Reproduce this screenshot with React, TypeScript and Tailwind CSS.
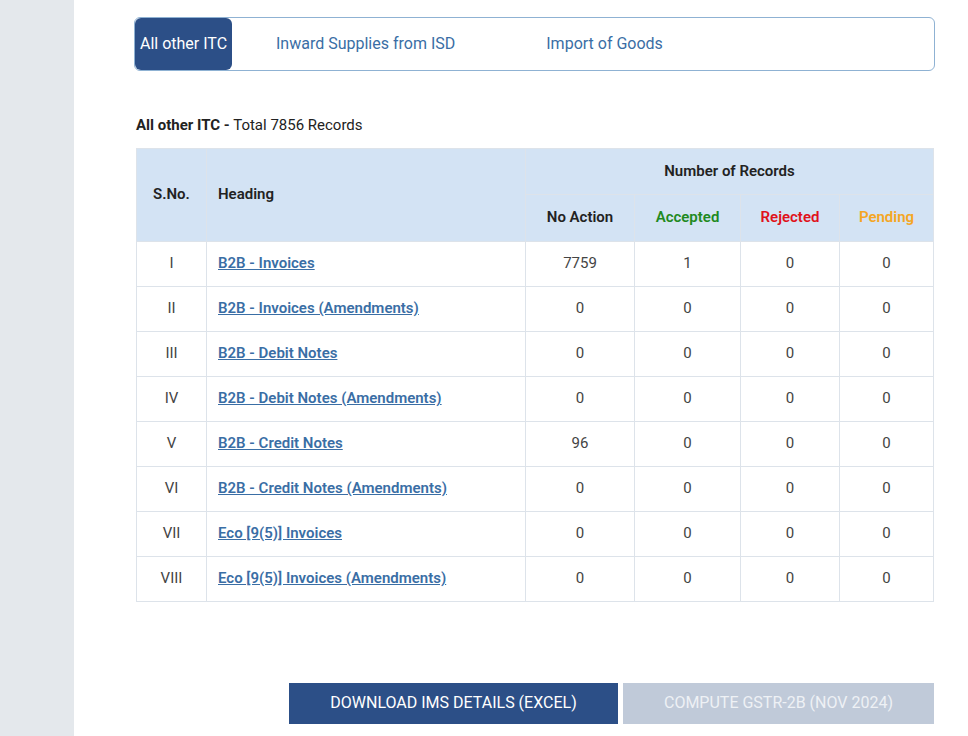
const rows: [string, string, number, number, number, number][] = [
  ["I", "B2B - Invoices", 7759, 1, 0, 0],
  ["II", "B2B - Invoices (Amendments)", 0, 0, 0, 0],
  ["III", "B2B - Debit Notes", 0, 0, 0, 0],
  ["IV", "B2B - Debit Notes (Amendments)", 0, 0, 0, 0],
  ["V", "B2B - Credit Notes", 96, 0, 0, 0],
  ["VI", "B2B - Credit Notes (Amendments)", 0, 0, 0, 0],
  ["VII", "Eco [9(5)] Invoices", 0, 0, 0, 0],
  ["VIII", "Eco [9(5)] Invoices (Amendments)", 0, 0, 0, 0],
];

export default function App() {
  return (
    <div className="flex h-[736px] w-[968px] overflow-hidden bg-white text-[#222]" style={{ fontFamily: "Roboto, 'Noto Sans', sans-serif" }}>
      <div className="w-[74px] shrink-0 bg-[#e4e8ec]" />
      <div className="flex-1 pl-[60px] pr-[33px] pt-[17px]">
        <div className="flex h-[54px] items-stretch rounded-md border border-[#8fb2d3] text-[16px]">
          <div className="flex w-[97px] items-center justify-center rounded-md bg-[#2c4f87] text-white">All other ITC</div>
          <div className="flex items-center pl-[44px] text-[#3a6ea5]">Inward Supplies from ISD</div>
          <div className="flex items-center pl-[91px] text-[#3a6ea5]">Import of Goods</div>
        </div>
        <div className="mt-[43px] ml-[2px] text-[15px]">
          <b>All other ITC -</b> Total 7856 Records
        </div>
        <table className="mt-[11px] ml-[2px] w-[798px] border-collapse text-[15px]">
          <thead className="bg-[#d3e3f4] font-semibold">
            <tr className="h-[46px]">
              <th rowSpan={2} className="w-[70px] border border-[#dde3ea] text-center font-semibold">S.No.</th>
              <th rowSpan={2} className="w-[319px] border border-[#dde3ea] pl-[11px] text-left font-semibold">Heading</th>
              <th colSpan={4} className="border border-[#dde3ea] font-semibold">Number of Records</th>
            </tr>
            <tr className="h-[47px]">
              <th className="w-[109px] border border-[#dde3ea] font-semibold">No Action</th>
              <th className="w-[106px] border border-[#dde3ea] font-semibold text-[#1f8a1f]">Accepted</th>
              <th className="w-[99px] border border-[#dde3ea] font-semibold text-[#e0121b]">Rejected</th>
              <th className="border border-[#dde3ea] font-semibold text-[#f5a623]">Pending</th>
            </tr>
          </thead>
          <tbody>
            {rows.map(r => (
              <tr key={r[0]} className="h-[45px]">
                <td className="border border-[#dde3ea] text-center text-[#444]">{r[0]}</td>
                <td className="border border-[#dde3ea] pl-[11px]">
                  <a className="font-semibold text-[#3a6ea5] underline">{r[1]}</a>
                </td>
                {r.slice(2).map((v, i) => (
                  <td key={i} className="border border-[#dde3ea] text-center text-[#444]">{v}</td>
                ))}
              </tr>
            ))}
          </tbody>
        </table>
        <div className="mt-[81px] flex justify-end gap-[5px] pr-[1px] text-[16px]">
          <button className="h-[41px] w-[329px] bg-[#2c4f87] text-white">DOWNLOAD IMS DETAILS (EXCEL)</button>
          <button className="h-[41px] w-[311px] bg-[#c0cad9] text-[#eef1f5]">COMPUTE GSTR-2B (NOV 2024)</button>
        </div>
      </div>
    </div>
  );
}
